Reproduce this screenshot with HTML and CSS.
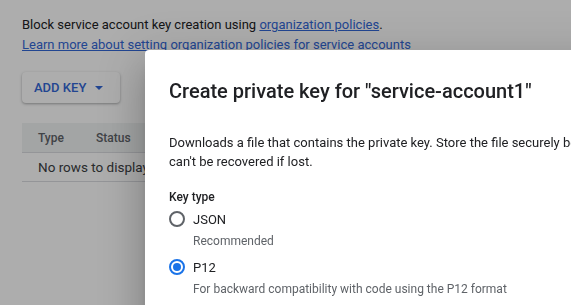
FILE: index.html
```html
<!DOCTYPE html>
<html lang="en">
<head>
    <meta charset="UTF-8">
    <meta name="viewport" content="width=device-width, initial-scale=1.0">
    <title>Service account keys</title>
    <link rel="stylesheet" href="styles.css">
</head>
<body>
    <div class="page">
        <p class="policy">
            Block service account key creation using <a href="#" class="link">organization policies</a>.<br>
            <a href="#" class="link">Learn more about setting organization policies for service accounts</a>
        </p>

        <button class="add-key">
            ADD KEY
            <svg class="caret" width="8" height="4" viewBox="0 0 10 5"><path d="M0 0h10L5 5z" fill="currentColor"/></svg>
        </button>

        <table class="keys-table">
            <thead>
                <tr>
                    <th class="col-type">Type</th>
                    <th>Status</th>
                    <th>Key</th>
                </tr>
            </thead>
            <tbody>
                <tr>
                    <td colspan="3">No rows to display</td>
                </tr>
            </tbody>
        </table>
    </div>

    <div class="scrim"></div>

    <div class="dialog">
        <h2 class="dialog-title">Create private key for "service-account1"</h2>
        <p class="dialog-text">
            Downloads a file that contains the private key. Store the file securely because this key<br>
            can't be recovered if lost.
        </p>

        <div class="field-label">Key type</div>
        <div class="radio-option">
            <span class="radio"></span>
            <span class="radio-label">JSON</span>
        </div>
        <div class="radio-hint">Recommended</div>
        <div class="radio-option second">
            <span class="radio checked"></span>
            <span class="radio-label">P12</span>
        </div>
        <div class="radio-hint">For backward compatibility with code using the P12 format</div>
    </div>
</body>
</html>
```

FILE: styles.css
```css
html, body {
    height: 100%;
}

body {
    margin: 0;
    font-family: Roboto, "Liberation Sans", Arial, sans-serif;
    color: #202124;
    background-color: #fff;
    overflow: hidden;
}

.page {
    padding: 15px 0 0 22px;
}

.policy {
    margin: 0;
    font-size: 13px;
    line-height: 20px;
}

.link {
    color: #3367d6;
    text-decoration: underline;
}

.add-key {
    display: flex;
    align-items: center;
    gap: 9px;
    margin-top: 17px;
    height: 31px;
    padding: 0 17px 0 12px;
    background-color: #fff;
    color: #3367d6;
    border: none;
    border-radius: 4px;
    font-family: inherit;
    font-size: 13px;
    font-weight: 500;
    box-shadow: 0 1px 3px rgba(60, 64, 67, 0.3), 0 1px 2px rgba(60, 64, 67, 0.15);
}

.caret {
    margin-top: 1px;
}

.keys-table {
    margin-top: 20px;
    width: 560px;
    border-collapse: collapse;
    font-size: 13px;
}

.keys-table th {
    height: 29px;
    padding: 0 16px;
    text-align: left;
    font-size: 12px;
    font-weight: 500;
    color: #5f6368;
    background-color: #f1f3f4;
    border-bottom: 1px solid #dadce0;
}

.keys-table th.col-type {
    width: 26px;
}

.keys-table td {
    height: 28px;
    padding: 0 16px;
    font-size: 13.5px;
    color: #3c4043;
    border-bottom: 1px solid #dadce0;
}

.scrim {
    position: fixed;
    inset: 0;
    background-color: rgba(0, 0, 0, 0.32);
}

.dialog {
    position: absolute;
    left: 145px;
    top: 50px;
    width: 600px;
    height: 400px;
    padding: 28px 24px 0;
    background-color: #fff;
    border-radius: 4px 0 0 0;
    box-shadow: 0 11px 15px -7px rgba(0, 0, 0, 0.2), 0 24px 38px 3px rgba(0, 0, 0, 0.14), 0 9px 46px 8px rgba(0, 0, 0, 0.12);
}

.dialog-title {
    margin: 0;
    font-size: 20px;
    font-weight: 500;
    line-height: 26px;
    color: #202124;
}

.dialog-text {
    margin: 29px 0 0;
    font-size: 13px;
    line-height: 19px;
    white-space: nowrap;
}

.field-label {
    margin-top: 18px;
    font-size: 12px;
    font-weight: 500;
    line-height: 16px;
}

.radio-option {
    display: flex;
    align-items: center;
    gap: 8px;
    margin-top: 4px;
    height: 20px;
    font-size: 13px;
}

.radio-option.second {
    margin-top: 8px;
}

.radio {
    width: 12px;
    height: 12px;
    border: 2px solid #5f6368;
    border-radius: 50%;
    display: flex;
    align-items: center;
    justify-content: center;
}

.radio.checked {
    border-color: #1a73e8;
}

.radio.checked::after {
    content: "";
    width: 8px;
    height: 8px;
    border-radius: 50%;
    background-color: #1a73e8;
}

.radio-hint {
    margin: 4px 0 0 24px;
    font-size: 12px;
    line-height: 16px;
    color: #5f6368;
}
```
